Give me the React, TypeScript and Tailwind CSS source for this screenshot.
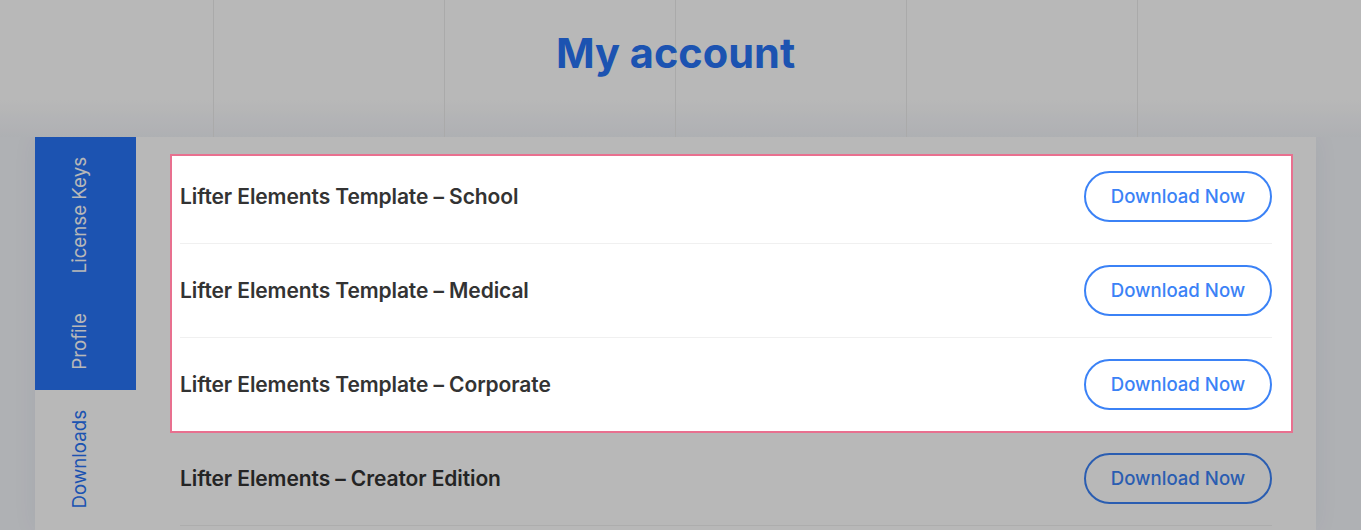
import React from 'react';

const tabs = [
  { label: 'License Keys', active: false },
  { label: 'Profile', active: false },
  { label: 'Downloads', active: true },
];

const downloads = [
  'Lifter Elements Template – School',
  'Lifter Elements Template – Medical',
  'Lifter Elements Template – Corporate',
  'Lifter Elements – Creator Edition',
];

function DownloadRow({ title }: { title: string }) {
  return (
    <div className="flex h-[94px] items-center justify-between border-b border-[#f0f0f0]">
      <span className="text-[21px] font-semibold tracking-[-0.1px] text-[#333333]">{title}</span>
      <button className="h-[51px] w-[188px] rounded-full border-2 border-[#3b82f6] bg-white text-[18.6px] font-medium text-[#3b82f6]">
        Download Now
      </button>
    </div>
  );
}

export default function App() {
  return (
    <div className="relative flex h-[530px] flex-col overflow-hidden bg-[#f3f5fa] font-['Inter',sans-serif]">
      {/* Header */}
      <div className="relative h-[137px] shrink-0 bg-[linear-gradient(to_bottom,#ffffff_0%,#ffffff_73%,#f2f4f9_100%)]">
        <div className="absolute inset-0 flex">
          <div className="w-[213px] shrink-0" />
          {[0, 1, 2, 3, 4].map((i) => (
            <div key={i} className="w-[231px] shrink-0 border-l border-[#ececec]" />
          ))}
        </div>
        <h1 className="relative pr-[10px] pt-[33px] text-center text-[41.5px] font-bold leading-none text-[#2773f6]">
          My account
        </h1>
      </div>

      {/* Account card */}
      <div className="ml-[35px] flex min-h-0 w-[1281px] flex-1 bg-white shadow-[0_0_24px_rgba(40,60,110,0.06)]">
        <nav className="flex w-[101px] shrink-0 flex-col">
          {tabs.map((tab) => (
            <div
              key={tab.label}
              className={`flex shrink-0 justify-center py-5 pr-3 ${tab.active ? 'bg-white text-[#2773f6]' : 'bg-[#2773f6] text-white'}`}
            >
              <span className="rotate-180 text-[18.7px] leading-[24px] [writing-mode:vertical-rl]">
                {tab.label}
              </span>
            </div>
          ))}
        </nav>

        <div className="flex-1 px-[44px] pt-[13px]">
          <div className="relative">
            {downloads.map((d) => (
              <DownloadRow key={d} title={d} />
            ))}
            {/* Spotlight highlight over the first three items */}
            <div className="pointer-events-none absolute left-[-10px] top-[4px] z-10 h-[279px] w-[1123px] border-2 border-[#e8708f] shadow-[0_0_0_9999px_rgba(0,0,0,0.28)]" />
          </div>
        </div>
      </div>
    </div>
  );
}
